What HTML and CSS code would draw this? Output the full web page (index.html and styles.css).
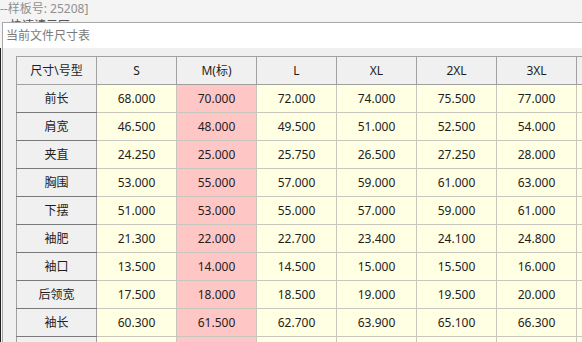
FILE: index.html
```html
<!DOCTYPE html>
<html lang="zh">
<head>
<meta charset="utf-8">
<title>当前文件尺寸表</title>
<link rel="stylesheet" href="styles.css">
</head>
<body>
<div class="desk">
  <div class="bg-line">--样板号: 25208]</div>
  <div class="bg-line bg-second">快速请示区</div>
  <div class="edge"></div>
  <div class="dialog">
    <div class="title">当前文件尺寸表</div>
    <div class="dbody">
      <table class="grid">
        <thead>
          <tr><th class="corner">尺寸\号型</th><th>S</th><th>M(标)</th><th>L</th><th>XL</th><th>2XL</th><th>3XL</th><th>4XL</th></tr>
        </thead>
        <tbody>
          <tr><th>前长</th><td>68.000</td><td class="base">70.000</td><td>72.000</td><td>74.000</td><td>75.500</td><td>77.000</td><td>78.500</td></tr>
          <tr><th>肩宽</th><td>46.500</td><td class="base">48.000</td><td>49.500</td><td>51.000</td><td>52.500</td><td>54.000</td><td>55.500</td></tr>
          <tr><th>夹直</th><td>24.250</td><td class="base">25.000</td><td>25.750</td><td>26.500</td><td>27.250</td><td>28.000</td><td>28.750</td></tr>
          <tr><th>胸围</th><td>53.000</td><td class="base">55.000</td><td>57.000</td><td>59.000</td><td>61.000</td><td>63.000</td><td>65.000</td></tr>
          <tr><th>下摆</th><td>51.000</td><td class="base">53.000</td><td>55.000</td><td>57.000</td><td>59.000</td><td>61.000</td><td>63.000</td></tr>
          <tr><th>袖肥</th><td>21.300</td><td class="base">22.000</td><td>22.700</td><td>23.400</td><td>24.100</td><td>24.800</td><td>25.500</td></tr>
          <tr><th>袖口</th><td>13.500</td><td class="base">14.000</td><td>14.500</td><td>15.000</td><td>15.500</td><td>16.000</td><td>16.500</td></tr>
          <tr><th>后领宽</th><td>17.500</td><td class="base">18.000</td><td>18.500</td><td>19.000</td><td>19.500</td><td>20.000</td><td>20.500</td></tr>
          <tr><th>袖长</th><td>60.300</td><td class="base">61.500</td><td>62.700</td><td>63.900</td><td>65.100</td><td>66.300</td><td>67.500</td></tr>
          <tr><th>前腰节</th><td>40.000</td><td class="base">41.000</td><td>42.000</td><td>43.000</td><td>44.000</td><td>45.000</td><td>46.000</td></tr>
        </tbody>
      </table>
    </div>
  </div>
</div>
</body>
</html>
```

FILE: styles.css
```css
html, body {
  margin: 0;
  padding: 0;
  width: 582px;
  height: 342px;
  overflow: hidden;
  background: #f4f4f4;
  font-family: "Noto Sans", "Noto Sans CJK SC", sans-serif;
}

.desk {
  position: relative;
  width: 582px;
  height: 342px;
  overflow: hidden;
}

.bg-line {
  height: 18px;
  line-height: 18px;
  font-size: 12px;
  color: #909090;
  white-space: nowrap;
}

.bg-second {
  padding-left: 10px;
  color: #555;
  margin-top: -1px;
}

.edge {
  position: absolute;
  left: 0;
  top: 48px;
  width: 1px;
  height: 300px;
  background: #222;
}

.dialog {
  position: absolute;
  left: 2px;
  top: 22px;
  width: 720px;
  height: 400px;
  border-left: 1px solid #a8a8a8;
  border-top: 1px solid #a8a8a8;
  background: #f0f0f0;
  display: flex;
  flex-direction: column;
}

.title {
  height: 25px;
  line-height: 25px;
  background: #ffffff;
  color: #7a7a7a;
  font-size: 12px;
  padding-left: 3px;
}

.dbody {
  padding: 8px 0 0 13px;
  background: #f0f0f0;
  flex: 1;
}

.grid {
  border-collapse: collapse;
  table-layout: fixed;
  font-size: 12px;
  color: #1e1e1e;
}

.grid th,
.grid td {
  width: 79px;
  height: 27px;
  padding: 0;
  text-align: center;
  font-weight: normal;
  white-space: nowrap;
  line-height: 27px;
}

.grid thead th {
  background: #f0f0f0;
  border: 1px solid #a0a0a0;
}

.grid tbody th {
  background: #f0f0f0;
  border-left: 1px solid #a0a0a0;
  border-right: 1px solid #a0a0a0;
  border-bottom: 1px solid #7a7a7a;
}

.grid td {
  background: #ffffe3;
  border: 1px solid #c9c7bd;
}

.grid td.base {
  background: #ffc6c6;
}
```
